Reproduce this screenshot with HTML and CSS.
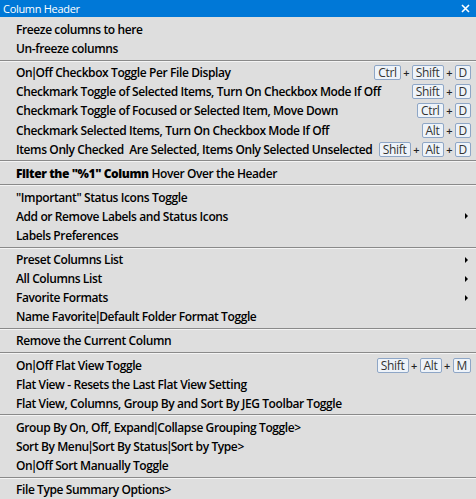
FILE: index.html
```html
<!DOCTYPE html>
<html>
<head>
<meta charset="utf-8">
<link rel="stylesheet" href="styles.css">
</head>
<body>
<div class="window">
  <div class="titlebar"><span>Column Header</span><svg class="close" width="9" height="9" viewBox="0 0 9 9"><path d="M1 1L8 8M8 1L1 8" stroke="#fff" stroke-width="1.6"/></svg></div>
  <div class="menu">
    <div class="item"><span>Freeze columns to here</span></div>
    <div class="item"><span>Un-freeze columns</span></div>
    <div class="sep"></div>
    <div class="item"><span>On<u>|</u>Off Checkbox Toggle Per File Display</span><span class="keys"><kbd>Ctrl</kbd><i>+</i><kbd>Shift</kbd><i>+</i><kbd>D</kbd></span></div>
    <div class="item"><span>Checkmark Toggle of Selected Items, Turn On Checkbox Mode If Off</span><span class="keys"><kbd>Shift</kbd><i>+</i><kbd>D</kbd></span></div>
    <div class="item"><span>Checkmark Toggle of Focused or Selected Item, Move Down</span><span class="keys"><kbd>Ctrl</kbd><i>+</i><kbd>D</kbd></span></div>
    <div class="item"><span>Checkmark Selected Items, Turn On Checkbox Mode If Off</span><span class="keys"><kbd>Alt</kbd><i>+</i><kbd>D</kbd></span></div>
    <div class="item"><span class="pre">Items Only Checked  Are Selected, Items Only Selected Unselected</span><span class="keys"><kbd>Shift</kbd><i>+</i><kbd>Alt</kbd><i>+</i><kbd>D</kbd></span></div>
    <div class="sep"></div>
    <div class="item"><span><b>Filter the "%1" Column</b> Hover Over the Header</span></div>
    <div class="sep"></div>
    <div class="item"><span>"Important" Status Icons Toggle</span></div>
    <div class="item"><span>Add or Remove Labels and Status Icons</span><span class="arrow"></span></div>
    <div class="item"><span>Labels Preferences</span></div>
    <div class="sep"></div>
    <div class="item"><span>Preset Columns List</span><span class="arrow"></span></div>
    <div class="item"><span>All Columns List</span><span class="arrow"></span></div>
    <div class="item"><span>Favorite Formats</span><span class="arrow"></span></div>
    <div class="item"><span>Name Favorite<u>|</u>Default Folder Format Toggle</span></div>
    <div class="sep"></div>
    <div class="item"><span>Remove the Current Column</span></div>
    <div class="sep"></div>
    <div class="item"><span>On<u>|</u>Off Flat View Toggle</span><span class="keys"><kbd>Shift</kbd><i>+</i><kbd>Alt</kbd><i>+</i><kbd>M</kbd></span></div>
    <div class="item"><span>Flat View - Resets the Last Flat View Setting</span></div>
    <div class="item"><span>Flat View, Columns, Group By and Sort By JEG Toolbar Toggle</span></div>
    <div class="sep"></div>
    <div class="item"><span>Group By On, Off, Expand<u>|</u>Collapse Grouping Toggle&gt;</span></div>
    <div class="item"><span>Sort By Menu<u>|</u>Sort By Status<u>|</u>Sort by Type&gt;</span></div>
    <div class="item"><span>On<u>|</u>Off Sort Manually Toggle</span></div>
    <div class="sep"></div>
    <div class="item"><span>File Type Summary Options&gt;</span></div>
  </div>
</div>
</body>
</html>
```
FILE: styles.css
```css
html, body {
  margin: 0;
  padding: 0;
  background: #dedede;
}
.window {
  width: 476px;
  height: 499px;
  overflow: hidden;
  background: #dedede;
  font-family: "Open Sans", "Noto Sans", sans-serif;
  color: #000;
}
.titlebar {
  height: 17px;
  background: #0078d7;
  color: #fff;
  font-size: 11px;
  letter-spacing: -0.3px;
  display: flex;
  align-items: center;
  justify-content: space-between;
  padding: 0 6px 0 3px;
}
.menu {
  padding-top: 3px;
}
.item {
  height: 19.1px;
  display: flex;
  align-items: center;
  justify-content: space-between;
  padding: 0 5px 0 16px;
  font-size: 12px;
  font-weight: 600;
  letter-spacing: -0.4px;
  white-space: nowrap;
}
.item b {
  font-weight: 800;
}
.item u {
  text-decoration: none;
  margin: 0 -1.5px;
}
.pre {
  white-space: pre;
}
.sep {
  height: 5px;
  display: flex;
  flex-direction: column;
  justify-content: center;
}
.sep::before {
  content: "";
  display: block;
  height: 1px;
  background: #8a8a8a;
  border-bottom: 1px solid #f4f4f4;
}
.keys {
  display: flex;
  align-items: center;
}
.keys i {
  font-style: normal;
  font-size: 11px;
  font-weight: 600;
  width: 11px;
  text-align: center;
  color: #222;
}
kbd {
  font-family: "Open Sans", "Noto Sans", sans-serif;
  font-size: 12px;
  font-weight: 400;
  letter-spacing: -0.3px;
  color: #333;
  height: 13px;
  line-height: 13px;
  padding: 0 3px;
  min-width: 8px;
  text-align: center;
  background: #eef3f9;
  border: 1px solid #8ea6c6;
  border-radius: 2px;
}
.arrow {
  width: 0;
  height: 0;
  margin-right: 3px;
  border-top: 3px solid transparent;
  border-bottom: 3px solid transparent;
  border-left: 3px solid #000;
}
```
